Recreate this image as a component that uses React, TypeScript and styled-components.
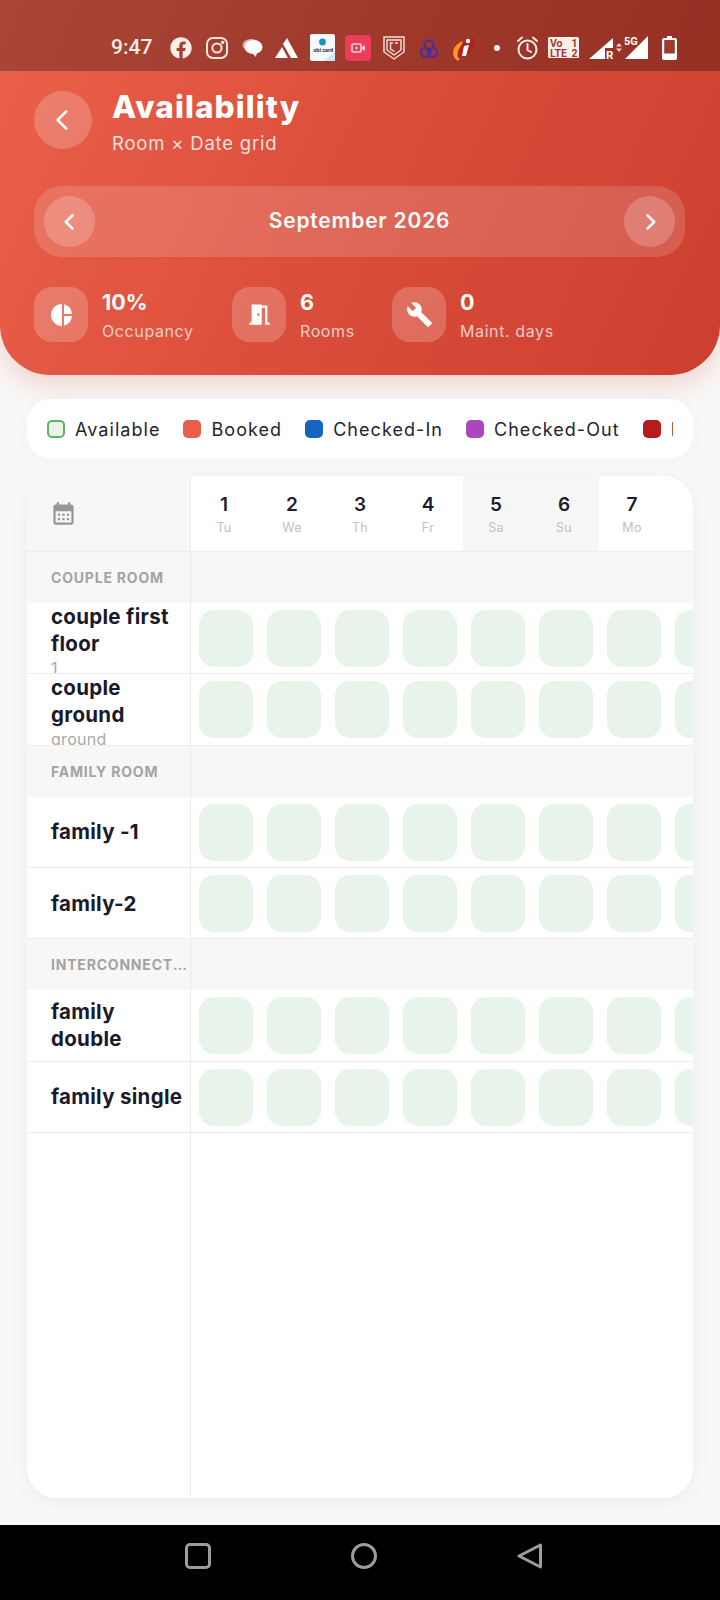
import React from "react";
import styled, { createGlobalStyle } from "styled-components";
import { MdMeetingRoom, MdBuild, MdCalendarMonth } from "react-icons/md";
import { FaFacebook } from "react-icons/fa";

const Global = createGlobalStyle`
  html, body { margin: 0; padding: 0; background: #f8f8f8; }
  * { box-sizing: border-box; }
  body { font-family: Inter, "Open Sans", "Liberation Sans", sans-serif; }
`;

const Screen = styled.div`
  width: 720px;
  height: 1600px;
  display: flex;
  flex-direction: column;
  background: #f8f8f8;
  overflow: hidden;
`;

const Hero = styled.header`
  height: 375px;
  flex: none;
  border-radius: 0 0 50px 50px;
  background: linear-gradient(115deg, #eb624c 0%, #dc4f3c 45%, #cc3f2f 100%);
  box-shadow: 0 10px 28px rgba(220, 80, 60, 0.22);
  display: flex;
  flex-direction: column;
`;

const StatusBar = styled.div`
  height: 71px;
  flex: none;
  display: flex;
  align-items: flex-start;
  padding: 34px 0 0 111px;
  background: rgba(0, 0, 0, 0.28);
  color: #fff;
`;

const Clock = styled.span`
  width: 43px;
  font-size: 21px;
  line-height: 27px;
  font-weight: 500;
  font-family: Roboto, sans-serif;
  color: #fbeeea;
  white-space: nowrap;
`;

const StatusIcon = styled.svg<{ $gap: number; $top?: number }>`
  flex: none;
  margin-left: ${(p) => p.$gap}px;
  margin-top: ${(p) => p.$top ?? 2}px;
  display: block;
  overflow: visible;
`;

const FacebookMark = styled(FaFacebook)`
  flex: none;
  margin: 3px 0 0 16px;
  color: #fbeeea;
`;

const HeroBody = styled.div`
  padding: 20px 35px 0 34px;
  color: #fff;
`;

const TitleRow = styled.div`
  display: flex;
  align-items: flex-start;
  gap: 20px;
`;

const RoundButton = styled.div<{ $size: number }>`
  flex: none;
  width: ${(p) => p.$size}px;
  height: ${(p) => p.$size}px;
  border-radius: 50%;
  background: rgba(255, 255, 255, 0.2);
  display: flex;
  align-items: center;
  justify-content: center;
`;

const TitleBlock = styled.div`
  display: flex;
  flex-direction: column;
`;

const Title = styled.h1`
  margin: 0;
  font-size: 31.5px;
  line-height: 32px;
  font-weight: 800;
  letter-spacing: 1.1px;
`;

const Subtitle = styled.div`
  margin-top: 6px;
  font-size: 18.5px;
  line-height: 28px;
  font-weight: 400;
  letter-spacing: 0.8px;
  color: rgba(255, 255, 255, 0.82);
`;

const MonthBar = styled.div`
  margin-top: 29px;
  height: 71px;
  border-radius: 28px;
  background: rgba(255, 255, 255, 0.15);
  padding: 0 10px;
  display: flex;
  align-items: center;
  justify-content: space-between;
`;

const MonthLabel = styled.div`
  margin-top: -2px;
  font-size: 21px;
  font-weight: 600;
  letter-spacing: 0.8px;
`;

const Stats = styled.div`
  margin-top: 30px;
  display: flex;
`;

const Stat = styled.div<{ $width: number }>`
  width: ${(p) => p.$width}px;
  display: flex;
  gap: 14px;
`;

const StatTile = styled.div`
  flex: none;
  width: 54px;
  height: 55px;
  border-radius: 18px;
  background: rgba(255, 255, 255, 0.2);
  display: flex;
  align-items: center;
  justify-content: center;
`;

const StatText = styled.div`
  display: flex;
  flex-direction: column;
`;

const StatValue = styled.div`
  font-size: 21.5px;
  line-height: 30px;
  font-weight: 700;
`;

const StatLabel = styled.div`
  font-size: 16px;
  line-height: 28px;
  letter-spacing: 0.6px;
  color: rgba(255, 255, 255, 0.72);
`;

const Legend = styled.div`
  margin: 24px 27px 0;
  height: 60px;
  flex: none;
  border-radius: 24px;
  background: #fff;
  box-shadow: 0 2px 12px rgba(0, 0, 0, 0.03);
  padding: 0 20px;
  display: flex;
  align-items: center;
`;

const LegendTrack = styled.div`
  flex: 1;
  overflow: hidden;
  display: flex;
  white-space: nowrap;
`;

const LegendItem = styled.div`
  flex: none;
  display: flex;
  align-items: center;
  gap: 10px;
  margin-right: 23px;
  font-size: 18px;
  letter-spacing: 1.05px;
  color: #24242f;
`;

const Swatch = styled.span<{ $fill: string; $edge?: string }>`
  width: 18px;
  height: 18px;
  border-radius: 5px;
  background: ${(p) => p.$fill};
  border: ${(p) => (p.$edge ? `2px solid ${p.$edge}` : "none")};
`;

const Board = styled.section`
  margin: 17px 27px 0;
  height: 1022px;
  flex: none;
  border-radius: 30px;
  background: #fff;
  box-shadow: 0 4px 18px rgba(0, 0, 0, 0.05);
  overflow: hidden;
  display: flex;
  flex-direction: column;
`;

const HeadRow = styled.div`
  height: 76px;
  flex: none;
  display: flex;
  border-bottom: 1px solid #ececec;
`;

const Corner = styled.div`
  width: 164px;
  flex: none;
  background: #f7f7f7;
  border-right: 1px solid #ececec;
  padding-left: 23px;
  display: flex;
  align-items: center;
  color: #979797;
`;

const DayHead = styled.div<{ $weekend: boolean }>`
  width: 68px;
  flex: none;
  display: flex;
  flex-direction: column;
  align-items: center;
  padding: 16px 2px 0 0;
  background: ${(p) => (p.$weekend ? "#f6f6f6" : "#fff")};
`;

const DayNum = styled.div`
  font-size: 19px;
  line-height: 26px;
  font-weight: 600;
  color: #1d1d2b;
`;

const DayName = styled.div`
  font-size: 12.5px;
  line-height: 20px;
  color: #c2c2c2;
  letter-spacing: 0.3px;
`;

const SectionRow = styled.div`
  height: 51px;
  flex: none;
  display: flex;
  background: #f7f7f7;
`;

const SectionName = styled.div`
  width: 164px;
  flex: none;
  padding-left: 24px;
  border-right: 1px solid #ececec;
  font-size: 14px;
  line-height: 51px;
  font-weight: 700;
  letter-spacing: 0.8px;
  color: #a3a3a3;
  white-space: nowrap;
  overflow: hidden;
  text-overflow: ellipsis;
`;

const RoomRow = styled.div`
  height: 71.33px;
  flex: none;
  display: flex;
  border-bottom: 1px solid #ececec;
  overflow: hidden;
`;

const RoomName = styled.div`
  width: 164px;
  flex: none;
  padding: 0 3px 0 24px;
  border-right: 1px solid #ececec;
  display: flex;
  flex-direction: column;
  justify-content: safe center;
`;

const RoomTitle = styled.div`
  font-size: 20.5px;
  line-height: 27px;
  font-weight: 700;
  letter-spacing: 0.3px;
  color: #1a1a2b;
`;

const RoomSub = styled.div`
  font-size: 16px;
  line-height: 22px;
  letter-spacing: 0.3px;
  color: #a9a9a9;
`;

const Cells = styled.div`
  display: flex;
  padding: 7px 0 0 8px;
  gap: 14px;
`;

const Cell = styled.div`
  width: 54px;
  height: 57px;
  flex: none;
  border-radius: 15px;
  background: #e8f3ea;
`;

const Rail = styled.div`
  flex: 1;
  width: 164px;
  border-right: 1px solid #ececec;
`;

const NavBar = styled.nav`
  margin-top: auto;
  height: 75px;
  flex: none;
  background: #000;
  padding: 18px 0 0 8px;
  display: flex;
  justify-content: center;
  gap: 140px;
  color: #9c9c9c;
`;

const days = [
  ["1", "Tu"],
  ["2", "We"],
  ["3", "Th"],
  ["4", "Fr"],
  ["5", "Sa"],
  ["6", "Su"],
  ["7", "Mo"],
];

const cellKeys = ["1", "2", "3", "4", "5", "6", "7", "8"];

type Room = { name: string; sub?: string };
const groups: { title: string; rooms: Room[] }[] = [
  {
    title: "COUPLE ROOM",
    rooms: [
      { name: "couple first floor", sub: "1" },
      { name: "couple ground", sub: "ground" },
    ],
  },
  { title: "FAMILY ROOM", rooms: [{ name: "family -1" }, { name: "family-2" }] },
  { title: "INTERCONNECTING", rooms: [{ name: "family double" }, { name: "family single" }] },
];

const Chevron = ({ dir, size, weight }: { dir: "l" | "r"; size: number; weight: number }) => (
  <svg width={size} height={size} viewBox="0 0 24 24" fill="none" stroke="#fff" strokeWidth={weight} strokeLinecap="round" strokeLinejoin="round">
    <path d={dir === "l" ? "M15 4l-8 8 8 8" : "M9 4l8 8-8 8"} />
  </svg>
);

const PieMark = () => (
  <svg width="24" height="24" viewBox="0 0 24 24" fill="#fff">
    <path d="M13 1A11 11 0 1 0 13 23Z" />
    <path d="M15 1.3A11 11 0 0 1 23 11H15Z" />
    <path d="M15 13H23A11 11 0 0 1 15 22.7Z" />
  </svg>
);

const StatusIcons = () => (
  <>
    <FacebookMark size={22} />
    <StatusIcon $gap={14} $top={3} width="22" height="22" viewBox="0 0 22 22" fill="none" stroke="#fbe6e0" strokeWidth="2">
      <rect x="1" y="1" width="20" height="20" rx="6" />
      <circle cx="11" cy="11" r="4.6" />
      <circle cx="16.6" cy="5.4" r="0.7" fill="#fbe6e0" />
    </StatusIcon>
    <StatusIcon $gap={14} $top={4} width="21" height="20" viewBox="0 0 21 20">
      <ellipse cx="9" cy="7" rx="8.5" ry="6" fill="#d9b3aa" />
      <ellipse cx="11.5" cy="9" rx="9" ry="7" fill="#fff" />
      <path d="M9 14l5 5 1-6z" fill="#fff" />
    </StatusIcon>
    <StatusIcon $gap={12} $top={4} width="23" height="20" viewBox="0 0 23 20" fill="#fff">
      <path d="M12 0L23 20H16L8 6Z" />
      <path d="M0 20L7 9L13 20Z" />
    </StatusIcon>
    <StatusIcon $gap={12} $top={0} width="25" height="27" viewBox="0 0 25 27">
      <rect width="25" height="27" rx="2" fill="#f7f9fb" />
      <circle cx="12.5" cy="8" r="3.4" fill="#1b8fc4" />
      <text x="3.5" y="18" fontSize="5.5" fontWeight="700" fontFamily="Roboto, sans-serif" fill="#23306f">sbi card</text>
      <path d="M13 27l12-9v9z" fill="#cfe4f2" />
    </StatusIcon>
    <StatusIcon $gap={10} $top={1} width="26" height="26" viewBox="0 0 26 26">
      <rect width="26" height="26" rx="4" fill="#ee3b5a" />
      <rect x="7" y="9" width="9" height="8" rx="1" fill="none" stroke="#fbd7dd" strokeWidth="1.6" />
      <path d="M17 12l3-2v6l-3-2z" fill="#fbd7dd" />
      <circle cx="11.5" cy="13" r="1.2" fill="#fbd7dd" />
    </StatusIcon>
    <StatusIcon $gap={12} $top={2} width="22" height="24" viewBox="0 0 22 24" fill="none" stroke="#f5e3de" strokeWidth="1.4">
      <path d="M1 1h20v15l-10 7-10-7z" />
      <path d="M4 4h14v10l-7 5-7-5z" />
      <path d="M10 7H7.5v6l4 2.5M12 7h3" />
    </StatusIcon>
    <StatusIcon $gap={15} $top={5} width="18" height="20" viewBox="0 0 18 20" fill="none" stroke="#4b2ba8" strokeWidth="2.2">
      <circle cx="9" cy="6" r="4.5" />
      <circle cx="5.5" cy="13.5" r="4.5" />
      <circle cx="12.5" cy="13.5" r="4.5" />
    </StatusIcon>
    <StatusIcon $gap={14} $top={2} width="23" height="25" viewBox="0 0 23 25">
      <path d="M6 25C-2 20 0 9 11 5l-3 8 2 6z" fill="#f39a1f" />
      <path d="M6 22C4 14 9 6 22 1c2 9-3 20-16 21z" fill="#b3201f" />
      <circle cx="16" cy="5" r="2.2" fill="#fff" />
      <path d="M12 10l5-1-3 11h-4z" fill="#fff" />
    </StatusIcon>
    <StatusIcon $gap={19} $top={11} width="6" height="6" viewBox="0 0 6 6">
      <circle cx="3" cy="3" r="3" fill="#fff" />
    </StatusIcon>
    <StatusIcon $gap={16} $top={2} width="23" height="24" viewBox="0 0 23 24" fill="none" stroke="#fbeeea" strokeWidth="2" strokeLinecap="round">
      <circle cx="11.5" cy="13.5" r="9" />
      <path d="M11.5 8v6l3.5 2M2 5l4-3.5M21 5l-4-3.5" />
    </StatusIcon>
    <StatusIcon $gap={9} $top={3} width="31" height="21" viewBox="0 0 31 21">
      <rect width="31" height="21" rx="1.5" fill="#fbeeea" />
      <text x="2" y="9.5" fontSize="10.5" fontWeight="700" fontFamily="Roboto, sans-serif" fill="#a03a2c">Vo</text>
      <text x="23.5" y="9.5" fontSize="10.5" fontWeight="700" fontFamily="Roboto, sans-serif" fill="#a03a2c">1</text>
      <text x="2" y="19.5" fontSize="10.5" fontWeight="700" fontFamily="Roboto, sans-serif" fill="#a03a2c">LTE</text>
      <text x="23.5" y="19.5" fontSize="10.5" fontWeight="700" fontFamily="Roboto, sans-serif" fill="#a03a2c">2</text>
    </StatusIcon>
    <StatusIcon $gap={10} $top={3} width="36" height="23" viewBox="0 0 36 23" fill="#fff">
      <path d="M0 22L24 1v10h-8v11z" />
      <text x="17" y="22" fontSize="11.5" fontWeight="700" fontFamily="Roboto, sans-serif">R</text>
      <path d="M30 6l3 3.5h-6zM30 15l-3-3.5h6z" fill="#f3d8d1" />
    </StatusIcon>
    <StatusIcon $gap={0} $top={2} width="23" height="23" viewBox="0 0 23 23" fill="#fff">
      <path d="M23 0v23H0z" />
      <text x="-1" y="9" fontSize="11" fontWeight="700" fontFamily="Roboto, sans-serif">5G</text>
    </StatusIcon>
    <StatusIcon $gap={14} $top={2} width="15" height="24" viewBox="0 0 15 24">
      <path d="M5 0h5v2h3a2 2 0 012 2v18a2 2 0 01-2 2H2a2 2 0 01-2-2V4a2 2 0 012-2h3z" fill="#fff" />
      <rect x="2.2" y="4" width="10.6" height="13.5" rx="0.5" fill="#a03a2c" />
    </StatusIcon>
  </>
);

const GroupBlock = ({ title, rooms }: { title: string; rooms: Room[] }) => (
  <>
    <SectionRow>
      <SectionName>{title}</SectionName>
    </SectionRow>
    {rooms.map((room) => (
      <RoomRow key={room.name}>
        <RoomName>
          <RoomTitle>{room.name}</RoomTitle>
          {room.sub && <RoomSub>{room.sub}</RoomSub>}
        </RoomName>
        <Cells>
          {cellKeys.map((d) => (
            <Cell key={d} />
          ))}
        </Cells>
      </RoomRow>
    ))}
  </>
);

export default function App() {
  return (
    <Screen>
      <Global />
      <Hero>
        <StatusBar>
          <Clock>9:47</Clock>
          <StatusIcons />
        </StatusBar>
        <HeroBody>
          <TitleRow>
            <RoundButton $size={58}>
              <Chevron dir="l" size={26} weight={2.4} />
            </RoundButton>
            <TitleBlock>
              <Title>Availability</Title>
              <Subtitle>Room × Date grid</Subtitle>
            </TitleBlock>
          </TitleRow>
          <MonthBar>
            <RoundButton $size={51}>
              <Chevron dir="l" size={20} weight={3} />
            </RoundButton>
            <MonthLabel>September 2026</MonthLabel>
            <RoundButton $size={51}>
              <Chevron dir="r" size={20} weight={3} />
            </RoundButton>
          </MonthBar>
          <Stats>
            <Stat $width={198}>
              <StatTile><PieMark /></StatTile>
              <StatText>
                <StatValue>10%</StatValue>
                <StatLabel>Occupancy</StatLabel>
              </StatText>
            </Stat>
            <Stat $width={160}>
              <StatTile><MdMeetingRoom size={27} /></StatTile>
              <StatText>
                <StatValue>6</StatValue>
                <StatLabel>Rooms</StatLabel>
              </StatText>
            </Stat>
            <Stat $width={180}>
              <StatTile><MdBuild size={27} /></StatTile>
              <StatText>
                <StatValue>0</StatValue>
                <StatLabel>Maint. days</StatLabel>
              </StatText>
            </Stat>
          </Stats>
        </HeroBody>
      </Hero>

      <Legend>
        <LegendTrack>
          <LegendItem><Swatch $fill="#e8f3ea" $edge="#5fb368" />Available</LegendItem>
          <LegendItem><Swatch $fill="#ea5f4a" />Booked</LegendItem>
          <LegendItem><Swatch $fill="#1565c0" />Checked-In</LegendItem>
          <LegendItem><Swatch $fill="#ab47bc" />Checked-Out</LegendItem>
          <LegendItem><Swatch $fill="#b71c1c" />In Repair</LegendItem>
        </LegendTrack>
      </Legend>

      <Board>
        <HeadRow>
          <Corner><MdCalendarMonth size={27} /></Corner>
          {days.map(([d, n]) => (
            <DayHead key={d} $weekend={n === "Sa" || n === "Su"}>
              <DayNum>{d}</DayNum>
              <DayName>{n}</DayName>
            </DayHead>
          ))}
        </HeadRow>
        {groups.map((g) => (
          <GroupBlock key={g.title} title={g.title} rooms={g.rooms} />
        ))}
        <Rail />
      </Board>

      <NavBar>
        <svg width="26" height="26" viewBox="0 0 26 26" fill="none" stroke="currentColor" strokeWidth="3">
          <rect x="1.5" y="1.5" width="23" height="23" rx="3.5" />
        </svg>
        <svg width="26" height="26" viewBox="0 0 26 26" fill="none" stroke="currentColor" strokeWidth="3">
          <circle cx="13" cy="13" r="11.5" />
        </svg>
        <svg width="26" height="26" viewBox="0 0 26 26" fill="none" stroke="currentColor" strokeWidth="3" strokeLinejoin="round">
          <path d="M23.5 2v22L2 13z" />
        </svg>
      </NavBar>
    </Screen>
  );
}
